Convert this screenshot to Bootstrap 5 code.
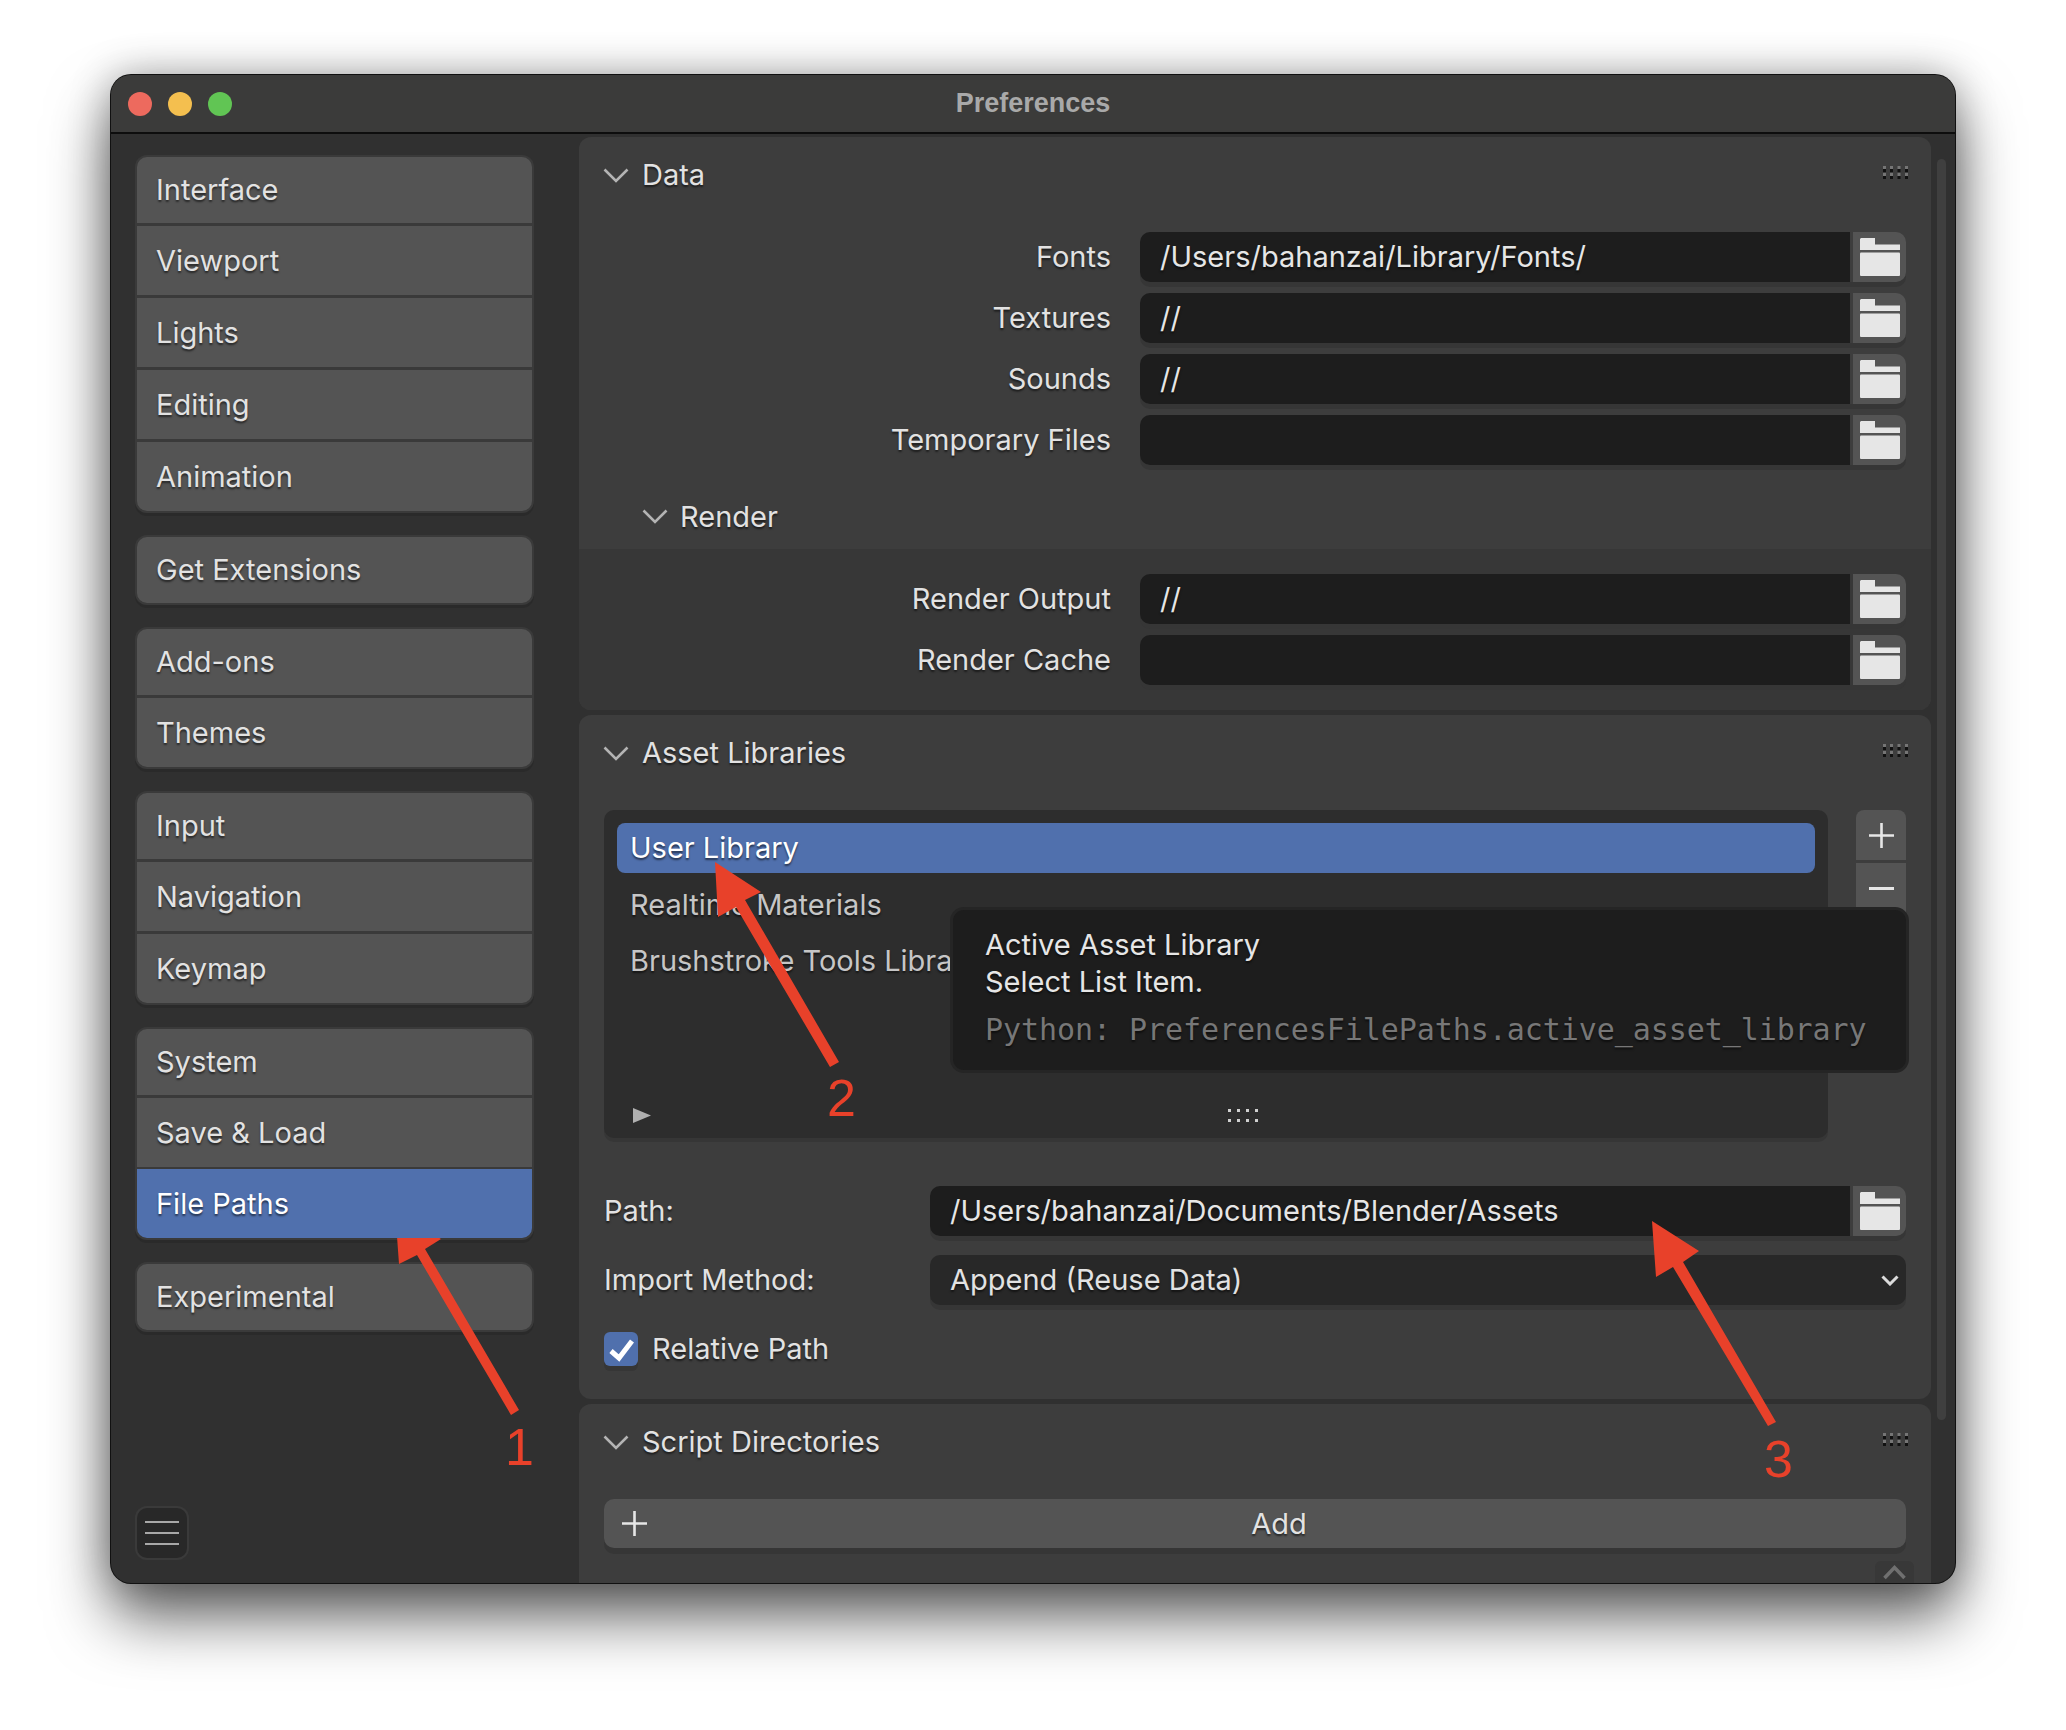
<!DOCTYPE html>
<html lang="en">
<head>
    <meta charset="utf-8">
    <title>Preferences</title>
    <link rel="stylesheet" href="https://cdn.jsdelivr.net/npm/bootstrap@5.3.3/dist/css/bootstrap.min.css">
    <style>
        body {
            background: #fff;
            margin: 0;
            padding: 75px 0 0 111px;
            width: 2066px;
            height: 1730px;
            overflow: hidden;
            position: relative;
            font-family: "Inter", "Liberation Sans", sans-serif;
            font-size: 29px;
            color: #e2e2e2;
            text-shadow: 0 2px 2px rgba(0, 0, 0, .55);
        }
        .pref-window {
            width: 1844px;
            height: 1508px;
            background: #303030;
            border-radius: 20px;
            box-shadow: 0 0 0 1px #111, 0 34px 62px rgba(0, 0, 0, .62), 0 0 40px rgba(0, 0, 0, .3);
            overflow: hidden;
            position: relative;
        }
        .title-bar {
            height: 59px;
            background: #3b3b3a;
            border-bottom: 2px solid #0d0d0d;
            position: relative;
        }
        .title-text {
            font-family: "Liberation Sans", sans-serif;
            font-weight: 700;
            font-size: 27px;
            color: #a9a9a9;
            text-shadow: none;
        }
        .win-dot { width: 24px; height: 24px; border-radius: 50%; }
        .dot-red { background: #ed6a5e; }
        .dot-yellow { background: #f4bf4f; }
        .dot-green { background: #61c554; }
        .dot-row { left: 17px; top: 17px; gap: 16px; }

        .side-col { width: 468px; padding: 23px 0 25px 26px; }
        .side-group {
            width: 395px;
            margin-bottom: 26px;
            gap: 3px;
            background: #3a3a3a;
            border-radius: 10px;
            box-shadow: 0 0 0 2px #3a3a3a, 0 3px 0 2px #2a2a2a;
            overflow: hidden;
        }
        .side-group .list-group-item {
            height: 69px;
            background: #545454;
            color: #e2e2e2;
            border: 0;
            border-radius: 0;
            padding: 0 0 0 19px;
            display: flex;
            align-items: center;
            margin: 0;
        }
        .side-group .list-group-item:first-child { height: 66px; }
        .side-group .list-group-item.active { background: #5070ad; color: #fff; }
        .menu-btn {
            width: 50px;
            height: 50px;
            background: #282828;
            border-radius: 10px;
            box-shadow: 0 0 0 2px #3a3a3a;
            gap: 9px;
        }
        .menu-btn span { width: 34px; height: 2px; background: #a8a8a8; }

        .panel-col { width: 1352px; padding-top: 3px; gap: 5px; }
        .pref-panel { background: #3d3d3d; border-radius: 12px 12px 0 0; }
        .pref-panel.closed { border-radius: 12px; }
        .panel-head { height: 76px; padding: 0 23px 0 24px; gap: 13px; }
        .chev { color: #b4b4b4; flex: none; }
        .grip { margin-top: -6px; flex: none; }
        .panel-body { padding: 19px 25px 0 0; }
        .path-row { gap: 29px; margin-bottom: 11px; }
        .path-row > label { width: 532px; text-align: right; margin: 0; }
        .path-group { flex: 1; gap: 3px; box-shadow: 0 5px 0 #363636; border-radius: 10px; height: 50px; }
        .path-input {
            flex: 1;
            background: #1d1d1d;
            border-radius: 10px 0 0 10px;
            padding-left: 20px;
            line-height: 50px;
            height: 50px;
            color: #e6e6e6;
        }
        .folder-btn {
            width: 53px;
            height: 50px;
            background: #545454;
            border-radius: 0 10px 10px 0;
        }
        .sub-head { height: 65px; margin-top: 19px; padding-left: 63px; gap: 12px; }
        .sub-body { background: #373737; padding: 25px 25px 14px 0; border-radius: 0 0 12px 12px; height: 161px; }

        .asset-body { padding: 19px 25px 33px 25px; }
        .lib-list {
            width: 1224px;
            height: 328px;
            background: #2d2d2d;
            border-radius: 10px;
            padding: 13px;
            box-shadow: 0 4px 0 #363636;
        }
        .lib-item { height: 50px; margin-bottom: 6.5px; padding-left: 13px; line-height: 50px; color: #c6c6c6; border-radius: 8px; white-space: nowrap; }
        .lib-item.selected { background: #5070ad; color: #fff; }
        .lib-foot { margin-top: auto; padding: 0 0 2px 16px; }
        .lib-foot .grip-mid { margin: 0 auto; padding-left: 20px; }
        .side-btns { width: 50px; margin-left: 28px; gap: 3px; }
        .square-btn { width: 50px; height: 50px; background: #545454; }
        .square-btn.up { border-radius: 8px 8px 0 0; }
        .lib-tip {
            position: absolute;
            left: 839px;
            top: 832px;
            width: 959px;
            height: 166px;
            background: #1d1d1d;
            border: 3px solid #252525;
            border-radius: 14px;
            padding: 16px 32px;
            color: #e6e6e6;
            line-height: 37px;
        }
        .tip-code {
            font-family: "DejaVu Sans Mono", "Liberation Mono", monospace;
            font-size: 30px;
            color: #777;
            margin-top: 11px;
            white-space: nowrap;
            letter-spacing: -.07px;
        }
        .field-row { height: 50px; margin-top: 48px; }
        .field-row > label { width: 326px; margin: 0; }
        .select-row { margin-top: 19px; }
        .path-select {
            flex: 1;
            height: 50px;
            background: #282828;
            border-radius: 10px;
            box-shadow: 0 5px 0 #363636;
            padding: 0 7px 0 20px;
        }
        .check-row { margin-top: 27px; height: 34px; gap: 14px; }
        .check-box { width: 34px; height: 34px; background: #5070ad; border-radius: 6px; box-shadow: 0 5px 0 #363636; }
        .add-btn {
            margin: 19px 25px 0 25px;
            height: 49px;
            background: #545454;
            border-radius: 10px;
            box-shadow: 0 6px 0 #363636;
            padding-left: 18px;
        }
        .add-label { flex: 1; text-align: center; padding-left: 5px; }

        .scroll-gutter { width: 24px; padding: 25px 0 0 6px; }
        .scroll-thumb { width: 9px; height: 1261px; background: #3f3f3f; border-radius: 5px; }
        .scroll-up {
            position: absolute;
            right: 41px;
            bottom: 0;
            width: 39px;
            height: 22px;
            background: #383838;
            border-radius: 6px 6px 0 0;
        }
        .marks { position: absolute; left: 0; top: 0; text-shadow: none; }
        .marks text { font-family: "Liberation Sans", sans-serif; font-size: 52px; fill: #e8412a; }
    </style>
</head>
<body>

<svg width="0" height="0" class="d-block">
    <defs>
        <symbol id="ico-chev" viewBox="0 0 26 15"><path d="M1.5 1.5 13 13 24.5 1.5" fill="none" stroke="currentColor" stroke-width="2.6"/></symbol>
        <symbol id="ico-folder" viewBox="0 0 40 38"><path d="M1 0H15V6.5H40V12H0V1Z" fill="#e6e6e6"/><rect y="14.5" width="40" height="23.5" rx="1" fill="#e6e6e6"/></symbol>
        <symbol id="ico-grip" viewBox="0 0 25 13">
            <path d="M0 0h3v3H0zM7 0h3v3H7zM14.500 0h3v3h-3zM22 0h3v3h-3zM0 7h3v3H0zM7 7h3v3H7zM14.500 7h3v3h-3zM22 7h3v3h-3z" fill="#757575"/>
            <path d="M0 3h3v3H0zM7 3h3v3H7zM14.500 3h3v3h-3zM22 3h3v3h-3zM0 10h3v3H0zM7 10h3v3H7zM14.500 10h3v3h-3zM22 10h3v3h-3z" fill="#111"/>
        </symbol>
        <symbol id="ico-plus" viewBox="0 0 25 25"><path d="M12.500 0V25M0 12.500H25" stroke="#e6e6e6" stroke-width="2.600"/></symbol>
    </defs>
</svg>

<div class="pref-window d-flex flex-column">
    <div class="title-bar d-flex align-items-center justify-content-center flex-none">
        <div class="dot-row d-flex position-absolute">
            <div class="win-dot dot-red"></div>
            <div class="win-dot dot-yellow"></div>
            <div class="win-dot dot-green"></div>
        </div>
        <span class="title-text">Preferences</span>
    </div>

    <div class="d-flex flex-grow-1 overflow-hidden">
        <div class="side-col d-flex flex-column flex-shrink-0">
            <div class="list-group side-group">
                <a class="list-group-item">Interface</a>
                <a class="list-group-item">Viewport</a>
                <a class="list-group-item">Lights</a>
                <a class="list-group-item">Editing</a>
                <a class="list-group-item">Animation</a>
            </div>
            <div class="list-group side-group">
                <a class="list-group-item">Get Extensions</a>
            </div>
            <div class="list-group side-group">
                <a class="list-group-item">Add-ons</a>
                <a class="list-group-item">Themes</a>
            </div>
            <div class="list-group side-group">
                <a class="list-group-item">Input</a>
                <a class="list-group-item">Navigation</a>
                <a class="list-group-item">Keymap</a>
            </div>
            <div class="list-group side-group">
                <a class="list-group-item">System</a>
                <a class="list-group-item">Save &amp; Load</a>
                <a class="list-group-item active">File Paths</a>
            </div>
            <div class="list-group side-group">
                <a class="list-group-item">Experimental</a>
            </div>
            <div class="menu-btn d-flex flex-column align-items-center justify-content-center mt-auto">
                <span></span><span></span><span></span>
            </div>
        </div>

        <div class="panel-col d-flex flex-column flex-shrink-0">
            <!-- Data -->
            <section class="pref-panel closed flex-shrink-0">
                <div class="panel-head d-flex align-items-center">
                    <svg class="chev" width="26" height="15"><use href="#ico-chev"/></svg>
                    <span class="flex-grow-1">Data</span>
                    <svg class="grip" width="25" height="13"><use href="#ico-grip"/></svg>
                </div>
                <div class="panel-body">
                    <div class="path-row d-flex align-items-center">
                        <label>Fonts</label>
                        <div class="path-group d-flex">
                            <div class="path-input">/Users/bahanzai/Library/Fonts/</div>
                            <div class="folder-btn d-flex align-items-center justify-content-center"><svg width="40" height="38"><use href="#ico-folder"/></svg></div>
                        </div>
                    </div>
                    <div class="path-row d-flex align-items-center">
                        <label>Textures</label>
                        <div class="path-group d-flex">
                            <div class="path-input">//</div>
                            <div class="folder-btn d-flex align-items-center justify-content-center"><svg width="40" height="38"><use href="#ico-folder"/></svg></div>
                        </div>
                    </div>
                    <div class="path-row d-flex align-items-center">
                        <label>Sounds</label>
                        <div class="path-group d-flex">
                            <div class="path-input">//</div>
                            <div class="folder-btn d-flex align-items-center justify-content-center"><svg width="40" height="38"><use href="#ico-folder"/></svg></div>
                        </div>
                    </div>
                    <div class="path-row d-flex align-items-center">
                        <label>Temporary Files</label>
                        <div class="path-group d-flex">
                            <div class="path-input"></div>
                            <div class="folder-btn d-flex align-items-center justify-content-center"><svg width="40" height="38"><use href="#ico-folder"/></svg></div>
                        </div>
                    </div>
                </div>
                <div class="sub-head d-flex align-items-center">
                    <svg class="chev" width="26" height="15"><use href="#ico-chev"/></svg>
                    <span>Render</span>
                </div>
                <div class="sub-body">
                    <div class="path-row d-flex align-items-center">
                        <label>Render Output</label>
                        <div class="path-group d-flex">
                            <div class="path-input">//</div>
                            <div class="folder-btn d-flex align-items-center justify-content-center"><svg width="40" height="38"><use href="#ico-folder"/></svg></div>
                        </div>
                    </div>
                    <div class="path-row d-flex align-items-center">
                        <label>Render Cache</label>
                        <div class="path-group d-flex">
                            <div class="path-input"></div>
                            <div class="folder-btn d-flex align-items-center justify-content-center"><svg width="40" height="38"><use href="#ico-folder"/></svg></div>
                        </div>
                    </div>
                </div>
            </section>

            <!-- Asset Libraries -->
            <section class="pref-panel closed flex-shrink-0">
                <div class="panel-head d-flex align-items-center">
                    <svg class="chev" width="26" height="15"><use href="#ico-chev"/></svg>
                    <span class="flex-grow-1">Asset Libraries</span>
                    <svg class="grip" width="25" height="13"><use href="#ico-grip"/></svg>
                </div>
                <div class="asset-body">
                    <div class="d-flex">
                        <div class="lib-list d-flex flex-column">
                            <div class="lib-item selected">User Library</div>
                            <div class="lib-item">Realtime Materials</div>
                            <div class="lib-item">Brushstroke Tools Library</div>
                            <div class="lib-foot d-flex align-items-center">
                                <svg width="18" height="15"><path d="M0 0 18 7.500 0 15Z" fill="#b0b0b0"/></svg>
                                <div class="grip-mid">
                                    <svg class="d-block" width="30" height="13"><path d="M0 0h3v3H0zM9 0h3v3H9zM18 0h3v3h-3zM27 0h3v3h-3zM0 10h3v3H0zM9 10h3v3H9zM18 10h3v3h-3zM27 10h3v3h-3z" fill="#cfcfcf"/></svg>
                                </div>
                            </div>
                        </div>
                        <div class="side-btns d-flex flex-column">
                            <div class="square-btn up d-flex align-items-center justify-content-center"><svg width="25" height="25"><use href="#ico-plus"/></svg></div>
                            <div class="square-btn d-flex align-items-center justify-content-center"><svg width="25" height="3"><rect width="25" height="3" fill="#e6e6e6"/></svg></div>
                        </div>
                    </div>
                    <div class="field-row d-flex align-items-center">
                        <label>Path:</label>
                        <div class="path-group d-flex">
                            <div class="path-input">/Users/bahanzai/Documents/Blender/Assets</div>
                            <div class="folder-btn d-flex align-items-center justify-content-center"><svg width="40" height="38"><use href="#ico-folder"/></svg></div>
                        </div>
                    </div>
                    <div class="field-row select-row d-flex align-items-center">
                        <label>Import Method:</label>
                        <div class="path-select d-flex align-items-center justify-content-between">
                            <span>Append (Reuse Data)</span>
                            <svg width="18" height="11"><path d="M1.500 1.500 9 9 16.500 1.500" fill="none" stroke="#dcdcdc" stroke-width="3"/></svg>
                        </div>
                    </div>
                    <div class="check-row d-flex align-items-center">
                        <div class="check-box"><svg class="d-block" width="34" height="34"><path d="M7 19 15 26 28 9" fill="none" stroke="#fff" stroke-width="5"/></svg></div>
                        <span>Relative Path</span>
                    </div>
                </div>
            </section>

            <!-- Script Directories -->
            <section class="pref-panel flex-grow-1">
                <div class="panel-head d-flex align-items-center">
                    <svg class="chev" width="26" height="15"><use href="#ico-chev"/></svg>
                    <span class="flex-grow-1">Script Directories</span>
                    <svg class="grip" width="25" height="13"><use href="#ico-grip"/></svg>
                </div>
                <div class="add-btn d-flex align-items-center">
                    <svg width="25" height="25" class="flex-shrink-0"><use href="#ico-plus"/></svg>
                    <span class="add-label">Add</span>
                </div>
            </section>
        </div>

        <div class="scroll-gutter flex-shrink-0">
            <div class="scroll-thumb"></div>
        </div>
    </div>

    <div class="lib-tip">
        <div>Active Asset Library</div>
        <div>Select List Item.</div>
        <div class="tip-code">Python: PreferencesFilePaths.active_asset_library</div>
    </div>
    <div class="scroll-up d-flex justify-content-center">
        <svg width="23" height="22"><path d="M1.500 17 11.500 6.500 21.500 17" fill="none" stroke="#707070" stroke-width="3.500"/></svg>
    </div>
</div>

<!-- red annotation arrows, page coordinates -->
<svg class="marks" width="2066" height="1730" viewBox="0 0 2066 1730">
    <g fill="#e8412a">
        <polygon points="395,1209 441,1239 425,1249 519,1410 511,1415 417,1255 399,1264"/>
        <polygon points="715,862 761,892 745,900 839,1062 830,1067 736,907 718,917"/>
        <polygon points="1652,1221 1699,1251 1683,1262 1776,1422 1768,1426 1673,1267 1656,1277"/>
    </g>
    <text x="505" y="1465">1</text>
    <text x="827" y="1116">2</text>
    <text x="1764" y="1477">3</text>
</svg>

<script src="https://cdn.jsdelivr.net/npm/bootstrap@5.3.3/dist/js/bootstrap.bundle.min.js"></script>
</body>
</html>
